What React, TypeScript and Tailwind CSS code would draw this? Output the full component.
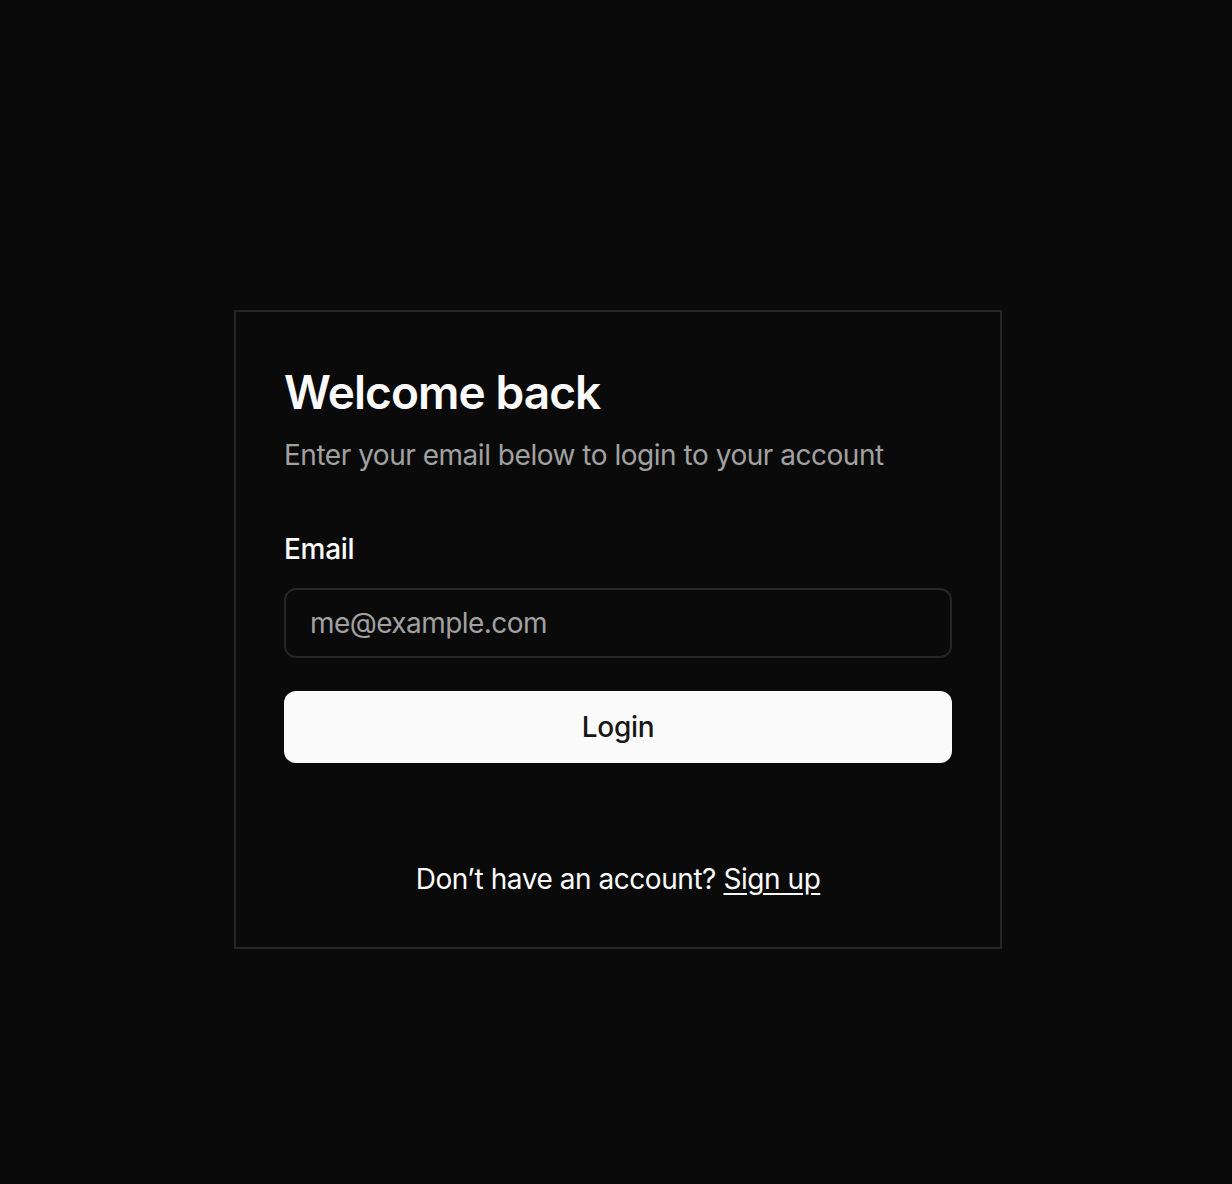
import React from "react";

export default function App() {
  return (
    <div
      className="min-h-screen w-full bg-[#0a0a0a] flex justify-center pt-[310px] pl-[4px]"
      style={{ fontFamily: "Inter, 'Noto Sans', sans-serif" }}
    >
      <div className="w-[768px] h-[639px] border-2 border-[#262626] bg-[#0a0a0a] p-12 flex flex-col">
        <h1 className="text-[46px] leading-[64px] font-semibold tracking-[-0.02em] text-[#fafafa]">
          Welcome back
        </h1>
        <p className="mt-[11px] text-[28px] leading-[40px] tracking-[-0.017em] text-[#a1a1a1]">
          Enter your email below to login to your account
        </p>
        <label className="mt-[54px] text-[28px] leading-[40px] font-medium tracking-[-0.01em] text-[#fafafa]">
          Email
        </label>
        <input
          type="email"
          placeholder="me@example.com"
          className="mt-[19px] h-[70px] w-full rounded-[12px] border-2 border-[#262626] bg-transparent px-[24px] text-[28px] tracking-[-0.02em] text-[#fafafa] placeholder:text-[#a1a1a1] outline-none"
        />
        <button className="mt-[33px] h-[72px] w-full rounded-[12px] bg-[#fafafa] text-[28px] font-medium tracking-[-0.01em] text-[#171717]">
          Login
        </button>
        <p className="mt-[96px] text-center text-[28px] leading-[40px] tracking-[-0.016em] text-[#fafafa]">
          Don’t have an account?{" "}
          <a href="#" className="underline underline-offset-4">
            Sign up
          </a>
        </p>
      </div>
    </div>
  );
}
